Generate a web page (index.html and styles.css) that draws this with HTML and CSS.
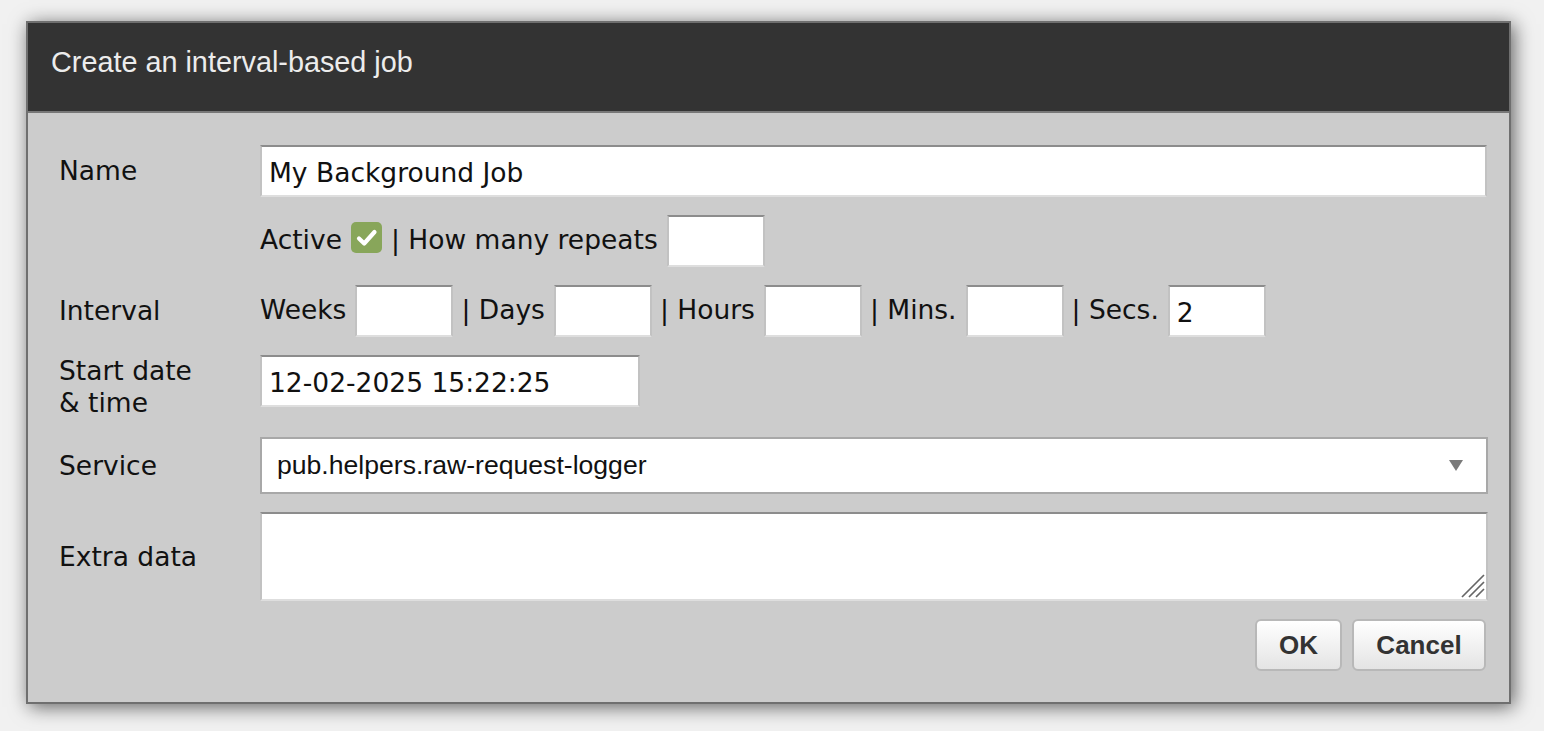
FILE: index.html
```html
<!DOCTYPE html>
<html>
<head>
<meta charset="utf-8">
<link rel="stylesheet" href="styles.css">
</head>
<body>
<div class="dialog">
  <div class="header">Create an interval-based job</div>
  <div class="body">
    <div class="form">
      <div class="label">Name</div>
      <div class="field"><input class="input wide" type="text" value="My Background Job"></div>

      <div class="label"></div>
      <div class="field inline">
        <span>Active</span>
        <span class="check"><svg width="31" height="31" viewBox="0 0 31 31"><rect x="0" y="0" width="31" height="31" rx="5" fill="#88a65a"/><path d="M8 16.5 L13.2 21.5 L23.5 10" fill="none" stroke="#fff" stroke-width="4.2" stroke-linecap="round" stroke-linejoin="round"/></svg></span>
        <span>| How many repeats</span>
        <input class="input small" type="text" value="">
      </div>

      <div class="label">Interval</div>
      <div class="field inline">
        <span>Weeks</span><input class="input small" type="text" value="">
        <span>| Days</span><input class="input small" type="text" value="">
        <span>| Hours</span><input class="input small" type="text" value="">
        <span>| Mins.</span><input class="input small" type="text" value="">
        <span>| Secs.</span><input class="input small" type="text" value="2">
      </div>

      <div class="label top">Start date<br>&amp; time</div>
      <div class="field top"><input class="input date" type="text" value="12-02-2025 15:22:25"></div>

      <div class="label">Service</div>
      <div class="field">
        <div class="select">
          <span class="select-text">pub.helpers.raw-request-logger</span>
          <svg class="arrow" width="14" height="11" viewBox="0 0 14 11"><path d="M0 0 H14 L7 11 Z" fill="#7a7a7a"/></svg>
        </div>
      </div>

      <div class="label">Extra data</div>
      <div class="field">
        <div class="textarea">
          <svg class="grip" width="24" height="24" viewBox="0 0 24 24"><path d="M1 23 L23 1 M8 23 L23 8 M15 23 L23 15" stroke="#666" stroke-width="1.7" fill="none"/></svg>
        </div>
      </div>
    </div>
    <div class="buttons">
      <button class="btn ok">OK</button>
      <button class="btn cancel">Cancel</button>
    </div>
  </div>
</div>
</body>
</html>
```
FILE: styles.css
```css
html, body {
  margin: 0;
  padding: 0;
}
body {
  background: #f1f1f1;
  padding: 21px 0 0 26px;
  width: 1518px;
  height: 710px;
  overflow: hidden;
  font-family: "DejaVu Sans", sans-serif;
}
.dialog {
  width: 1481px;
  border: 2px solid #6f6f6f;
  background: #cccccc;
  box-shadow: 3px 3px 18px rgba(0, 0, 0, 0.6);
}
.header {
  box-sizing: border-box;
  height: 90px;
  background: #333333;
  border-bottom: 2px solid #777777;
  color: #ececec;
  font-family: "Liberation Sans", Arial, sans-serif;
  font-size: 28.8px;
  line-height: 78px;
  padding-left: 23px;
}
.body {
  padding: 32px 22px 31px 31px;
}
.form {
  display: grid;
  grid-template-columns: 201px 1fr;
  row-gap: 18px;
  align-items: center;
}
.label {
  font-size: 26.5px;
  color: #111;
  line-height: 32px;
}
.label.top {
  align-self: start;
}
.field {
  font-size: 26.5px;
  color: #111;
}
.field.top {
  align-self: start;
}
.inline {
  display: flex;
  align-items: center;
  height: 52px;
  white-space: pre;
}
.inline span {
  margin-right: 9px;
  padding-bottom: 4px;
}
.inline .input {
  margin-right: 8px;
}
.input {
  display: block;
  box-sizing: border-box;
  height: 52px;
  border: 2px solid;
  border-color: #8c8c8c #c2c2c2 #dedede #c2c2c2;
  background: #fff;
  font-family: "DejaVu Sans", sans-serif;
  font-size: 26.5px;
  color: #111;
  padding: 2px 8px 0 7px;
  outline: none;
}
.input.wide {
  width: 1227px;
}
.input.small {
  width: 98px;
}
.input.date {
  width: 380px;
}
.inline span.check {
  display: inline-flex;
  width: 31px;
  height: 31px;
  padding-bottom: 0;
  margin-bottom: 8px;
}
.select {
  box-sizing: border-box;
  height: 57px;
  width: 1228px;
  border: 2px solid #a8a8a8;
  background: #fff;
  display: flex;
  align-items: center;
  justify-content: space-between;
  padding: 0 23px 0 15px;
}
.select-text {
  font-family: "Liberation Sans", Arial, sans-serif;
  font-size: 26.6px;
  color: #111;
}
.textarea {
  box-sizing: border-box;
  height: 89px;
  width: 1228px;
  border: 2px solid;
  border-color: #8c8c8c #c2c2c2 #dedede #c2c2c2;
  background: #fff;
  display: flex;
  justify-content: flex-end;
  align-items: flex-end;
  padding: 0 1px 1px 0;
}
.buttons {
  display: flex;
  justify-content: flex-end;
  gap: 10px;
  margin-top: 18px;
  padding-right: 1px;
}
.btn {
  height: 52px;
  box-sizing: border-box;
  border: 2px solid #b8b8b8;
  border-radius: 6px;
  background: linear-gradient(#ffffff, #e4e4e4);
  font-family: "Liberation Sans", Arial, sans-serif;
  font-weight: bold;
  font-size: 26px;
  color: #333;
  padding: 0;
}
.btn.ok {
  width: 87px;
}
.btn.cancel {
  width: 134px;
}
```
